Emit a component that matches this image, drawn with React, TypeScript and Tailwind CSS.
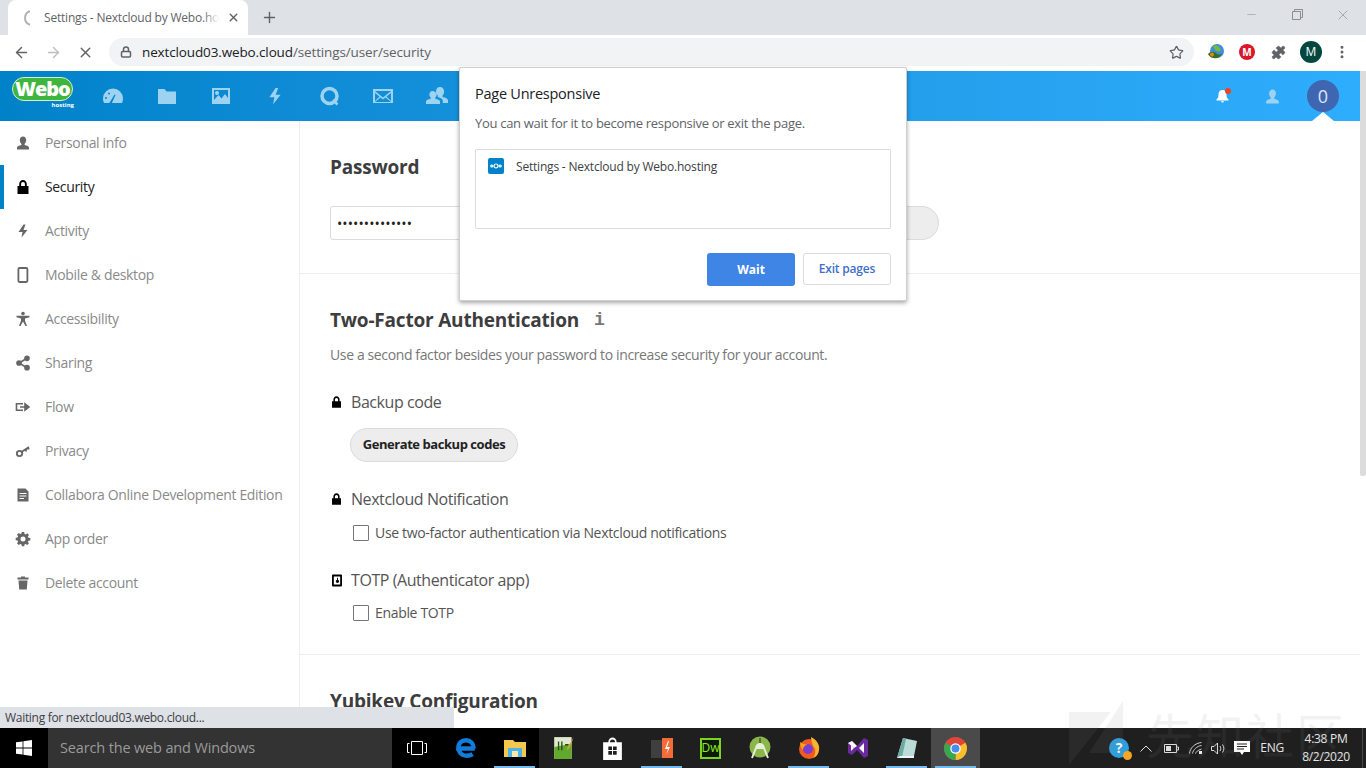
import { ReactNode } from "react";
import { ArrowLeft, ArrowRight, X, Plus, Star, Lock, Minus, MoreVertical, Puzzle, Share2 } from "lucide-react";

const ui = "font-['Open_Sans','Noto_Sans',sans-serif]";

function Glyph({ d, size = 16, className = "" }: { d: string; size?: number; className?: string }) {
  return (
    <svg width={size} height={size} viewBox="0 0 16 16" className={className} fill="currentColor" fillRule="evenodd">
      <path d={d} />
    </svg>
  );
}

const icons = {
  person: "M8 1.500c-2 0-3.200 1.600-3.200 3.600 0 1.500.6 3 1.600 3.800v1.200c-2.200.6-4.400 1.400-4.400 2.700v1.700h12v-1.700c0-1.300-2.200-2.100-4.400-2.700V8.900c1-.8 1.600-2.300 1.600-3.800 0-2-1.200-3.600-3.200-3.600z",
  lock: "M8 1C5.800 1 4.200 2.800 4.200 5v2H2.500v8h11V7h-1.700V5C11.800 2.800 10.200 1 8 1zm0 2c1.200 0 1.900.9 1.900 2v2H6.100V5c0-1.100.7-2 1.900-2z",
  bolt: "M8.500 1.500 3.500 9h4l-1 5.500L12.500 7h-4l2-5.500z",
  doc: "M2.500 1.500h8l3 3v10h-11zM4.500 6v1h7V6zm0 2.500v1h7v-1zm0 2.500v1h4.500v-1z",
  trash: "M6 1.500V2.500H2.500v2h11v-2H10V1.500zM3.500 5.500l.7 9h7.600l.7-9z",
  gear: "M6.800 1h2.400l.3 1.900 1.200.5L12.300 2.300 14 4l-1.100 1.600.5 1.200 1.900.3v2.400l-1.900.3-.5 1.200L14 12.300 12.300 14l-1.600-1.100-1.200.5-.3 1.900H6.800l-.3-1.900-1.200-.5L3.700 14 2 12.300l1.100-1.600-.5-1.200L.7 9.200V6.800l1.900-.3.5-1.200L2 3.700 3.700 2l1.600 1.100 1.200-.5zM8 5.500a2.500 2.500 0 1 0 0 5 2.500 2.500 0 0 0 0-5z",
};

function NavItem({ icon, label, active }: { icon: ReactNode; label: string; active?: boolean }) {
  return (
    <div className={`relative flex h-11 items-center text-[14px] ${active ? "text-[#222]" : "text-[#8a8a8a]"}`}>
      {active && <span className="absolute inset-y-0 left-0 w-1 bg-[#0082c9]" />}
      <span className={`flex w-[45px] justify-center ${active ? "text-black" : "text-[#666]"}`}>{icon}</span>
      <span className="whitespace-nowrap pb-[2px] tracking-[-0.34px]">{label}</span>
    </div>
  );
}

function Checkbox({ label }: { label: string }) {
  return (
    <div className="ml-[23px] flex items-center gap-[6px] text-[14px] text-[#555]">
      <span className="h-4 w-4 rounded-[1px] border border-[#777] bg-white" />
      <span className="tracking-[-0.33px]">{label}</span>
    </div>
  );
}

function HeaderApp({ children }: { children: ReactNode }) {
  return <div className="flex w-[54px] justify-center text-[#9dd3f0]">{children}</div>;
}

function Browser() {
  return (
    <>
      <div className="flex h-[35px] shrink-0 items-end bg-[#dee1e6] pl-2">
        <div className="flex h-[35px] w-[240px] items-center rounded-t-lg bg-white pl-3 pr-2">
          <svg width="16" height="16" viewBox="0 0 16 16" fill="none" stroke="#b0b3b8" strokeWidth="2">
            <path d="M10 1.300A7 7 0 0 0 10 14.700" />
          </svg>
          <span className="relative ml-[8px] w-[175px] overflow-hidden whitespace-nowrap text-[12px] tracking-[-0.2px] text-[#5f6368]">
            Settings - Nextcloud by Webo.hosting
            <span className="absolute inset-y-0 right-0 w-4 bg-gradient-to-r from-transparent to-white" />
          </span>
          <X size={13} strokeWidth={2.5} className="ml-auto text-[#5f6368]" />
        </div>
        <Plus size={17} strokeWidth={2} className="mb-[9px] ml-[13px] text-[#5f6368]" />
        <div className="ml-auto flex h-full items-start text-[#8b8d90]">
          <div className="flex h-[29px] w-[46px] items-center justify-center">
            <Minus size={13} strokeWidth={1} />
          </div>
          <div className="flex h-[29px] w-[46px] items-center justify-center">
            <svg width="11" height="11" viewBox="0 0 11 11" fill="none" stroke="currentColor">
              <path d="M.5 2.500h8v8h-8zM2.500 2.500v-2h8v8h-2" />
            </svg>
          </div>
          <div className="flex h-[29px] w-[46px] items-center justify-center">
            <X size={16} strokeWidth={1} />
          </div>
        </div>
      </div>
      <div className="flex h-9 shrink-0 items-center bg-white pb-[2px]">
        <ArrowLeft size={17} strokeWidth={2} className="ml-[13px] text-[#5f6368]" />
        <ArrowRight size={17} strokeWidth={2} className="ml-[15px] text-[#bcbfc3]" />
        <X size={17} strokeWidth={2} className="ml-[15px] text-[#5f6368]" />
        <div className="ml-[15px] flex h-7 w-[1085px] items-center rounded-full bg-[#f1f3f4] pl-[11px] pr-[10px] text-[13.5px]">
          <Lock size={12} strokeWidth={3} className="text-[#5f6368]" />
          <span className="ml-[10px] tracking-[-0.13px] text-[#202124]">nextcloud03.webo.cloud</span>
          <span className="tracking-[-0.13px] text-[#5f6368]">/settings/user/security</span>
          <Star size={15} strokeWidth={2} className="ml-auto text-[#5f6368]" />
        </div>
        <svg width="18" height="18" viewBox="0 0 18 18" className="ml-[13px]">
          <circle cx="10" cy="8" r="7" fill="#3f8fd6" />
          <path d="M6 3c4-2 6 1 8 4-3 3-6 1-8-4z" fill="#7cb936" />
          <path d="M1 11c3-3 6-3 9 0 2 1 3 1 5-1-1 4-5 6-8 5-3 0-5-2-6-4z" fill="#3a6b1e" />
          <circle cx="5" cy="11.500" r="2" fill="#d98a1f" />
        </svg>
        <div className="ml-[14px] flex h-4 w-4 items-center justify-center rounded-full bg-[#d9162a] text-[10px] font-bold leading-none text-white">
          M
        </div>
        <Puzzle size={15} fill="#5f6368" strokeWidth={1} className="ml-[16px] text-[#5f6368]" />
        <div className="ml-[14px] flex h-[22px] w-[22px] items-center justify-center rounded-full bg-[#00473f] text-[12px] text-white">
          M
        </div>
        <MoreVertical size={16} strokeWidth={2.5} className="ml-[12px] text-[#5f6368]" />
      </div>
    </>
  );
}

function NcHeader() {
  return (
    <div className="relative flex h-[50px] shrink-0 items-center bg-gradient-to-r from-[#0082c9] to-[#2fadfd] pl-[12px]">
      <div className="relative mr-[13px] h-[38px] w-[62px]">
        <div className="absolute left-0 top-[0px] w-[61px] rounded-[12px] border border-[#d6f0c8] bg-[#3fb53f] text-center text-[20px] font-extrabold leading-[22px] tracking-[-1.1px] text-white">
          Webo
        </div>
        <span className="absolute right-0 top-[24px] text-[6px] font-bold text-white">hosting</span>
      </div>
      <div className="-ml-[1px] flex items-center">
        <HeaderApp>
          <svg width="22" height="20" viewBox="0 0 22 20" fill="currentColor" fillRule="evenodd">
            <path d="M11 2.500a10 10 0 0 0-10 10c0 1.700.4 3.300 1.200 4.500h5.200l5.100-8.500 1 .6-3.600 7.900H20c.6-1.300 1-2.800 1-4.500a10 10 0 0 0-10-10zM4 11a1 1 0 1 1 0 2 1 1 0 0 1 0-2zM7 6.500a1 1 0 1 1 0 2 1 1 0 0 1 0-2z" />
          </svg>
        </HeaderApp>
        <HeaderApp>
          <svg width="20" height="18" viewBox="0 0 20 18" fill="currentColor">
            <path d="M1 2h6.500l2 2.500H19V17H1z" />
          </svg>
        </HeaderApp>
        <HeaderApp>
          <svg width="20" height="18" viewBox="0 0 20 18" fill="currentColor" fillRule="evenodd">
            <path d="M1 1h18v16H1zM3 3v10l4.500-5 3 3.500L14 7l3 4V3zM6 4a2 2 0 1 0 0 4 2 2 0 0 0 0-4z" />
          </svg>
        </HeaderApp>
        <HeaderApp>
          <Glyph d={icons.bolt} size={20} />
        </HeaderApp>
        <HeaderApp>
          <svg width="21" height="20" viewBox="0 0 21 20" fill="none" stroke="currentColor" strokeWidth="3.5">
            <circle cx="10.500" cy="10" r="7.500" />
            <path d="M14 14l4.500 4.500" strokeWidth="2.500" />
          </svg>
        </HeaderApp>
        <HeaderApp>
          <svg width="20" height="16" viewBox="0 0 20 16" fill="currentColor" fillRule="evenodd">
            <path d="M0 1h20v14H0zM2 3l8 6.500L18 3zM2 5v8l4.500-4.500zM18 5l-4.500 3.500L18 13zM7.500 9.500 2 14h16l-5.500-4.500L10 11.500z" />
          </svg>
        </HeaderApp>
        <HeaderApp>
          <svg width="22" height="20" viewBox="0 0 22 20" fill="currentColor">
            <path d="M14 1c-2.500 0-4 2-4 4.300 0 1.800.7 3.300 1.800 4.300v1.500c3 .8 5 2 5 3.900V17H22v-2.700c0-1.700-2.800-2.700-5.500-3.300V9.600c1-1 1.600-2.500 1.600-4.300C18 3 16.500 1 14 1zM6.500 5C4.700 5 3.400 6.500 3.400 8.400c0 1.300.5 2.500 1.300 3.200v1.100C2.500 13.300 0 14 0 15.500V18h14v-2.500c0-1.500-2.500-2.200-4.700-2.800v-1.100c.8-.7 1.300-1.900 1.300-3.200C10.600 6.500 8.300 5 6.500 5z" />
          </svg>
        </HeaderApp>
      </div>
      <div className="ml-auto mr-[21px] flex items-center">
        <div className="relative mr-[35px] text-white">
          <svg width="13" height="14" viewBox="0 0 13 14" fill="currentColor">
            <path d="M6.500 1C4 1 2.500 3 2.500 5.500c0 2.500-.5 3.500-2 5v1h12v-1c-1.500-1.500-2-2.500-2-5C10.500 3 9 1 6.500 1zM4.800 12.300a1.800 1.800 0 0 0 3.400 0z" />
          </svg>
          <span className="absolute -right-[2px] -top-[1px] h-[6px] w-[6px] rounded-full bg-[#f5421e]" />
        </div>
        <Glyph d={icons.person} size={17} className="mr-[26px] text-[#9dd3f0]" />
        <div className="relative flex h-8 w-8 items-center justify-center rounded-full bg-[#3f67b1] text-[18px] text-[#dbe7f5]">
          0
          <span className="absolute -bottom-[9px] left-1/2 -ml-[11px] h-0 w-0 border-x-[11px] border-b-[9px] border-x-transparent border-b-white" />
        </div>
      </div>
    </div>
  );
}

function Sidebar() {
  const s = 16;
  return (
    <div className="w-[300px] shrink-0 border-r border-[#ededed] bg-white">
      <NavItem icon={<Glyph d={icons.person} size={s} />} label="Personal info" />
      <NavItem icon={<Glyph d={icons.lock} size={s} />} label="Security" active />
      <NavItem icon={<Glyph d={icons.bolt} size={s} />} label="Activity" />
      <NavItem
        icon={
          <svg width="16" height="16" viewBox="0 0 16 16" fill="none" stroke="currentColor" strokeWidth="1.8">
            <rect x="3.400" y="1" width="9" height="14" rx="1.200" />
          </svg>
        }
        label="Mobile & desktop"
      />
      <NavItem
        icon={
          <svg width="16" height="16" viewBox="0 0 16 16" fill="currentColor">
            <circle cx="8" cy="2.500" r="1.800" />
            <path d="M1.500 4.800h13v1.400L10 7.500v2.300l2 5.200h-1.500L8 10.500 5.500 15H4l2-5.200V7.500L1.500 6.200z" />
          </svg>
        }
        label="Accessibility"
      />
      <NavItem icon={<Share2 size={16} fill="currentColor" strokeWidth={2.5} />} label="Sharing" />
      <NavItem
        icon={
          <svg width="16" height="16" viewBox="0 0 16 16" fill="none" stroke="currentColor" strokeWidth="1.600">
            <path d="M8 4.800H1.500v6.400H8" />
            <path d="M5 8h6M10 4.800 14 8l-4 3.200z" fill="currentColor" />
          </svg>
        }
        label="Flow"
      />
      <NavItem
        icon={
          <svg width="16" height="16" viewBox="0 0 16 16" fill="none" stroke="currentColor" strokeWidth="1.800">
            <circle cx="4.500" cy="10.500" r="2.700" />
            <path d="M6.800 8.800 14 4M11 6v2.500M13.500 4.500V6.500" />
          </svg>
        }
        label="Privacy"
      />
      <NavItem icon={<Glyph d={icons.doc} size={s} />} label="Collabora Online Development Edition" />
      <NavItem icon={<Glyph d={icons.gear} size={s} />} label="App order" />
      <NavItem icon={<Glyph d={icons.trash} size={s} />} label="Delete account" />
    </div>
  );
}

function FactorTitle({ icon, label }: { icon: ReactNode; label: string }) {
  return (
    <div className="flex h-[22px] items-center gap-[8px] text-[16px] text-[#555]">
      <span className="flex w-[13px] justify-center text-black">{icon}</span>
      <span className="tracking-[-0.43px]">{label}</span>
    </div>
  );
}

function Content() {
  const heading = "text-[19px] font-bold leading-[30px] tracking-[-0.2px] text-[#3d3d3d]";
  return (
    <div className="min-w-0 flex-1 bg-white">
      <div className="h-[153px] border-b border-[#ededed] pl-[30px] pt-[31px]">
        <h2 className={`h-[30px] ${heading}`}>Password</h2>
        <div className="mt-[24px] flex h-[34px] items-center">
          <div className="flex h-[34px] w-[140px] items-center rounded-[3px] border border-[#dbdbdb] pl-[6px] text-[14px] tracking-[0.1px] text-[#222]">
            ••••••••••••••
          </div>
          <div className="ml-[10px] h-[34px] w-[459px] rounded-full border border-[#dbdbdb] bg-[#ededed]" />
        </div>
      </div>
      <div className="h-[381px] border-b border-[#ededed] pl-[30px] pt-[31px]">
        <div className="flex h-[30px] items-center gap-[15px]">
          <h2 className={heading}>Two-Factor Authentication</h2>
          <span className="font-['Liberation_Mono',monospace] text-[18px] font-bold leading-none text-[#777]">i</span>
        </div>
        <p className="mt-[10px] h-5 text-[14px] leading-5 tracking-[-0.375px] text-[#777]">
          Use a second factor besides your password to increase security for your account.
        </p>
        <div className="mt-[26px]">
          <FactorTitle icon={<Glyph d={icons.lock} size={14} />} label="Backup code" />
        </div>
        <button className="ml-5 mt-[15px] flex h-[34px] w-[168px] items-center justify-center rounded-full border border-[#dbdbdb] bg-[#ededed] text-[13px] font-bold tracking-[-0.45px] text-[#222]">
          Generate backup codes
        </button>
        <div className="mt-[26px]">
          <FactorTitle icon={<Glyph d={icons.lock} size={14} />} label="Nextcloud Notification" />
        </div>
        <div className="mt-[12px]">
          <Checkbox label="Use two-factor authentication via Nextcloud notifications" />
        </div>
        <div className="mt-[26px]">
          <FactorTitle
            icon={
              <svg width="10" height="13" viewBox="0 0 11 13" fill="currentColor" fillRule="evenodd">
                <path d="M1 0h9a1 1 0 0 1 1 1v11a1 1 0 0 1-1 1H1a1 1 0 0 1-1-1V1a1 1 0 0 1 1-1zm1 2v9h7V2zm3.500 1.500v2.100a1.800 1.800 0 1 0 1 0V3.500z" />
              </svg>
            }
            label="TOTP (Authenticator app)"
          />
        </div>
        <div className="mt-[11px]">
          <Checkbox label="Enable TOTP" />
        </div>
      </div>
      <div className="pl-[30px] pt-[31px]">
        <h2 className={`h-[30px] ${heading}`}>Yubikey Configuration</h2>
      </div>
    </div>
  );
}

function Dialog() {
  return (
    <div className="absolute left-[459px] top-[67px] z-20 h-[234px] w-[448px] rounded-[2px] border border-[#cfcfcf] bg-white px-[15px] pt-[15px] shadow-[0_2px_4px_rgba(0,0,0,0.35)]">
      <div className="h-[22px] text-[14.5px] leading-[22px] tracking-[-0.25px] text-[#202124]">Page Unresponsive</div>
      <div className="mt-[9px] h-[18px] text-[13px] leading-[18px] tracking-[-0.3px] text-[#5f6368]">
        You can wait for it to become responsive or exit the page.
      </div>
      <div className="mt-[17px] flex h-[80px] items-start rounded-[1px] border border-[#dadce0] pl-3 pt-2">
        <div className="flex h-4 w-4 items-center justify-center rounded-[2px] bg-[#0082c9]">
          <svg width="12" height="6" viewBox="0 0 12 6" fill="none" stroke="white" strokeWidth="1.2">
            <circle cx="6" cy="3" r="2" />
            <circle cx="1.800" cy="3" r="1" />
            <circle cx="10.200" cy="3" r="1" />
          </svg>
        </div>
        <span className="ml-3 mt-[1px] text-[12px] leading-4 tracking-[-0.2px] text-[#3c4043]">
          Settings - Nextcloud by Webo.hosting
        </span>
      </div>
      <div className="mt-[24px] flex justify-end gap-2">
        <button className="flex h-[33px] w-[88px] items-center justify-center rounded-[3px] bg-[#3f85e6] text-[12px] font-bold text-white">
          Wait
        </button>
        <button className="flex h-[32px] w-[88px] items-center justify-center rounded-[3px] border border-[#dadce0] text-[12px] font-semibold tracking-[-0.2px] text-[#3f6fc9]">
          Exit pages
        </button>
      </div>
    </div>
  );
}

function TaskIcon({ children, active, open }: { children: ReactNode; active?: boolean; open?: boolean }) {
  return (
    <div className={`relative flex h-10 w-[49px] items-center justify-center ${active ? "bg-[#4a4a4a]" : ""}`}>
      {children}
      {open && <span className="absolute bottom-0 left-[4px] right-[4px] h-[2px] bg-[#76b9ed]" />}
    </div>
  );
}

function Taskbar() {
  return (
    <div className="flex h-10 shrink-0 items-center bg-[#1f1f1f] text-white">
      <div className="flex h-10 w-12 items-center justify-center bg-black">
        <svg width="16" height="16" viewBox="0 0 16 16" fill="white">
          <path d="M0 2.300 6.600 1.400V7.600H0zM7.400 1.300 16 0V7.600H7.400zM0 8.400H6.600V14.600L0 13.700zM7.400 8.400H16V16L7.400 14.700z" />
        </svg>
      </div>
      <div className="flex h-10 w-[344px] items-center bg-[#333] pl-3 text-[14.5px] tracking-[-0.15px] text-[#9a9a9a]">
        Search the web and Windows
      </div>
      <div className="flex h-10 bg-black">
        <TaskIcon>
          <svg width="20" height="14" viewBox="0 0 20 14" fill="none" stroke="white">
            <path d="M4.500.5h11v13h-11zM2.500 2.500H.5v9h2M17.500 2.500h2v9h-2" />
          </svg>
        </TaskIcon>
        <TaskIcon>
          <svg width="22" height="22" viewBox="0 0 20 20" fill="none" stroke="#0f7ddb" strokeWidth="4">
            <path d="M18 10.500H3C3 5.500 6 3 10 3s7 3 7 7.500M3.500 9c-.5 5 2.500 8 7 8 2 0 4-.5 5.500-1.500" />
          </svg>
        </TaskIcon>
        <TaskIcon open>
          <svg width="22" height="20" viewBox="0 0 22 20">
            <path d="M0 2h9l2 2h11v15H0z" fill="#f2c94c" />
            <path d="M4 10h14v9H4z" fill="#4fb3e8" />
            <path d="M8 13h6v6H8z" fill="#f8e7a8" />
          </svg>
        </TaskIcon>
      </div>
      <TaskIcon>
        <svg width="22" height="24" viewBox="0 0 20 22">
          <path d="M1 1h16v20H1z" fill="#dfe8d0" />
          <path d="M1 10 17 7v14H1z" fill="#62a82e" />
          <path d="M5 5v8M8 5v8M11 8h3" stroke="#2b4a12" strokeWidth="1.2" />
          <path d="M19 1 13 11l-1 2 3-2z" fill="#d8a33a" />
        </svg>
      </TaskIcon>
      <TaskIcon>
        <svg width="21" height="25" viewBox="0 0 20 24" fill="white">
          <path d="M1 6h18v17H1zM6 6c0-6 8-6 8 0h-1.500c0-3.500-5-3.500-5 0z" />
          <path d="M6 10h3.500v3.500H6zM10.500 10H14v3.500h-3.500zM6 14.500h3.500V18H6zM10.500 14.500H14V18h-3.500z" fill="#1f1f1f" />
        </svg>
      </TaskIcon>
      <TaskIcon open>
        <svg width="24" height="22" viewBox="0 0 24 22">
          <path d="M1 3h11v18H1z" fill="#3f3f3f" />
          <path d="M12 1h11v20H12z" fill="#f26b38" />
          <path d="M18 4l-3 8h3l-2 6 4-8h-3l2-6z" fill="#fff" />
        </svg>
      </TaskIcon>
      <TaskIcon>
        <div className="flex h-[21px] w-[21px] items-center justify-center border-2 border-[#7ed321] bg-[#0c1a06] text-[12px] leading-none text-[#8be82a]">
          Dw
        </div>
      </TaskIcon>
      <TaskIcon>
        <svg width="22" height="24" viewBox="0 0 22 24">
          <circle cx="11" cy="11" r="10.500" fill="#8bb74a" />
          <path d="M6 13c0-4 2.500-6 5-6s5 2 5 6z" fill="#e7efd8" />
          <path d="M7 12 3 22M15 12l4 10" stroke="#e7efd8" strokeWidth="2" />
          <path d="M11 2v5" stroke="#55752a" strokeWidth="2" />
        </svg>
      </TaskIcon>
      <TaskIcon open>
        <svg width="24" height="24" viewBox="0 0 24 24">
          <circle cx="12" cy="13" r="10" fill="#f2591f" />
          <path d="M14 1c6 3 9 8 8 13-1 5-3 7-6 8 3-4 3-9 0-12-1-3-2-6-2-9z" fill="#fbb22c" />
          <circle cx="11" cy="13" r="5" fill="#7a3fd0" />
          <path d="M3 6c2 2 6 2 8 3-3 0-5 2-5 5-2-2-3-5-3-8z" fill="#f9a11b" />
        </svg>
      </TaskIcon>
      <TaskIcon>
        <svg width="22" height="22" viewBox="0 0 22 22">
          <path d="M1 6 5 4l5 5 7-8 4 2v16l-4 2-7-8-5 5-4-2z" fill="#6a2a9e" />
          <path d="M4 8v6l3-3zM17 6l-5 5 5 5z" fill="#fff" />
          <path d="M1 6 5 4l5 5-3 2z" fill="#fff" />
        </svg>
      </TaskIcon>
      <TaskIcon open>
        <svg width="24" height="22" viewBox="0 0 24 22">
          <path d="M8 1l14 3-3 15L2 21z" fill="#b9dcd8" />
          <path d="M2 21 8 1l3 1-4 18z" fill="#6fa9a5" />
          <path d="M2 21h17v-2H5z" fill="#f2f2f2" />
        </svg>
      </TaskIcon>
      <TaskIcon active open>
        <svg width="23" height="23" viewBox="0 0 22 22">
          <circle cx="11" cy="11" r="11" fill="#e0453a" />
          <path d="M11 11 20.500 5.500A11 11 0 0 1 11 22z" fill="#f9c02e" />
          <path d="M11 11 11 22A11 11 0 0 1 1.500 5.500z" fill="#36a852" />
          <circle cx="11" cy="11" r="5" fill="white" />
          <circle cx="11" cy="11" r="3.800" fill="#4a8cf0" />
        </svg>
      </TaskIcon>
      <div className="ml-auto flex h-10 items-center pr-[3px]">
        <div className="relative mr-[11px] flex h-[20px] w-[20px] items-center justify-center rounded-full bg-[#2b9fe0] text-[14px] font-bold leading-none text-white">
          ?
          <span className="absolute -bottom-[2px] -right-[3px] h-[9px] w-[9px] rounded-full bg-[#f5a623]" />
        </div>
        <svg width="12" height="7" viewBox="0 0 12 7" fill="none" stroke="#ddd" className="mr-[12px]">
          <path d="M.5 6.500 6 1l5.500 5.500" />
        </svg>
        <svg width="15" height="9" viewBox="0 0 15 9" fill="none" stroke="#ddd" className="mr-[10px]">
          <path d="M.5.5h12v8H.5zM13 3h1.500v3H13" />
          <path d="M2 2h5v5H2z" fill="#ddd" stroke="none" />
        </svg>
        <svg width="13" height="12" viewBox="0 0 13 12" fill="none" stroke="#ccc" className="mr-[9px]">
          <path d="M.5 11.500C1 6 6 1 12.500.5M3.500 11.500C4 8 8 4 12.500 3.500M6.500 11.500C7 10 9 8 12.500 7" />
          <path d="M10 9h3v3h-3z" fill="#eee" stroke="none" />
        </svg>
        <svg width="15" height="13" viewBox="0 0 15 13" fill="none" stroke="#ddd" className="mr-[8px]">
          <path d="M.5 4.500h2.500L6.500 1v11L3 8.500H.5zM9 4c1 1.500 1 3.500 0 5M11.500 2.500c1.800 2.500 1.800 5.500 0 8" />
        </svg>
        <svg width="16" height="16" viewBox="0 0 16 16" fill="white" fillRule="evenodd" className="mr-[10px]">
          <path d="M0 1h16v11h-6l-2 3-2-3H0zM3 3.500v1h10v-1zM3 6v1h10V6zM3 8.500v1h7v-1z" />
        </svg>
        <span className="mr-[18px] text-[12px] tracking-[-0.2px] text-[#e6e6e6]">ENG</span>
        <div className="flex w-[48px] flex-col items-center text-[12px] leading-[18px] tracking-[-0.3px] text-[#e6e6e6]">
          <span>4:38 PM</span>
          <span>8/2/2020</span>
        </div>
        <span className="ml-[12px] h-full w-px bg-[#4a4a4a]" />
      </div>
    </div>
  );
}

export default function App() {
  return (
    <div className={`relative flex h-[768px] w-[1366px] flex-col overflow-hidden bg-white ${ui}`}>
      <Browser />
      <div className="relative flex min-h-0 flex-1 overflow-hidden">
        <div className="flex min-w-0 flex-1 flex-col">
          <NcHeader />
          <div className="flex min-h-0 flex-1 overflow-hidden">
            <Sidebar />
            <Content />
          </div>
        </div>
        <div className="w-[6px] shrink-0 bg-white">
          <div className="h-[405px] rounded-b-[2px] bg-[#dcdcdc]" />
        </div>
        <div className="absolute bottom-0 left-0 flex h-[21px] w-[454px] items-center bg-[#dee1e6] pl-[5px] text-[12px] tracking-[-0.3px] text-[#3c4043]">
          Waiting for nextcloud03.webo.cloud...
        </div>
      </div>
      <Taskbar />
      <Dialog />
      {/* watermark */}
      <div className="pointer-events-none absolute bottom-0 right-[20px] z-30 flex h-[70px] items-center text-[#8a8a8a] opacity-[0.1]">
        <svg width="54" height="64" viewBox="0 0 54 64" fill="currentColor" className="mr-[23px]">
          <path d="M0 11h42L0 64zM54 0v52H20z" />
        </svg>
        <span className="font-['Noto_Sans_CJK_SC',sans-serif] text-[48px] leading-none tracking-[2px]">先知社区</span>
      </div>
    </div>
  );
}
